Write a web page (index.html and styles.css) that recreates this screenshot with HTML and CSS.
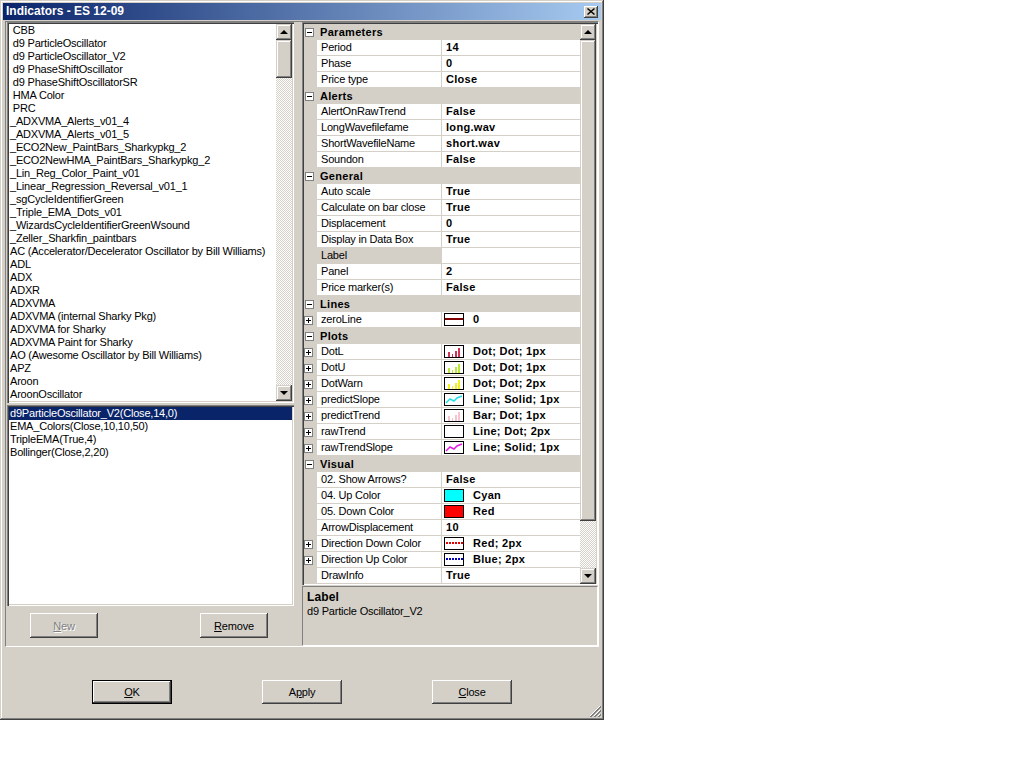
FILE: index.html
```html
<!DOCTYPE html>
<html>
<head>
<meta charset="utf-8">
<title>Indicators - ES 12-09</title>
<link rel="stylesheet" href="styles.css">
</head>
<body>
<div class="window">
  <div class="titlebar">
    <span class="title">Indicators - ES 12-09</span>
    <span class="close-btn"><svg width="8" height="7" viewBox="0 0 8 7"><path d="M0.5 0.5 L7.5 6.5 M7.5 0.5 L0.5 6.5" stroke="#000" stroke-width="1.4"/></svg></span>
  </div>
  <div class="panel">
    <div class="left">
      <div class="list list-top">
        <div class="items">
          <div class="item"> CBB</div>
          <div class="item"> d9 ParticleOscillator</div>
          <div class="item"> d9 ParticleOscillator_V2</div>
          <div class="item"> d9 PhaseShiftOscillator</div>
          <div class="item"> d9 PhaseShiftOscillatorSR</div>
          <div class="item"> HMA Color</div>
          <div class="item"> PRC</div>
          <div class="item">_ADXVMA_Alerts_v01_4</div>
          <div class="item">_ADXVMA_Alerts_v01_5</div>
          <div class="item">_ECO2New_PaintBars_Sharkypkg_2</div>
          <div class="item">_ECO2NewHMA_PaintBars_Sharkypkg_2</div>
          <div class="item">_Lin_Reg_Color_Paint_v01</div>
          <div class="item">_Linear_Regression_Reversal_v01_1</div>
          <div class="item">_sgCycleIdentifierGreen</div>
          <div class="item">_Triple_EMA_Dots_v01</div>
          <div class="item">_WizardsCycleIdentifierGreenWsound</div>
          <div class="item">_Zeller_Sharkfin_paintbars</div>
          <div class="item">AC (Accelerator/Decelerator Oscillator by Bill Williams)</div>
          <div class="item">ADL</div>
          <div class="item">ADX</div>
          <div class="item">ADXR</div>
          <div class="item">ADXVMA</div>
          <div class="item">ADXVMA (internal Sharky Pkg)</div>
          <div class="item">ADXVMA for Sharky</div>
          <div class="item">ADXVMA Paint for Sharky</div>
          <div class="item">AO (Awesome Oscillator by Bill Williams)</div>
          <div class="item">APZ</div>
          <div class="item">Aroon</div>
          <div class="item">AroonOscillator</div>
        </div>
        <div class="vscroll">
          <div class="sbtn"><span class="arrow-up"></span></div>
          <div class="thumb thumb-list"></div>
          <div class="track"></div>
          <div class="sbtn"><span class="arrow-down"></span></div>
        </div>
      </div>
      <div class="list list-bottom">
        <div class="items">
          <div class="item selected">d9ParticleOscillator_V2(Close,14,0)</div>
          <div class="item">EMA_Colors(Close,10,10,50)</div>
          <div class="item">TripleEMA(True,4)</div>
          <div class="item">Bollinger(Close,2,20)</div>
        </div>
      </div>
      <div class="btnrow">
        <div class="btn small disabled"><span><u>N</u>ew</span></div>
        <div class="btn small"><span><u>R</u>emove</span></div>
      </div>
    </div>
    <div class="right">
      <div class="grid">
        <div class="rows">
          <div class="cat"><span class="box"><svg width="9" height="9" viewBox="0 0 9 9"><rect x="0.5" y="0.5" width="8" height="8" fill="#fff" stroke="#808080"/><path d="M2 4.5 H7" stroke="#000"/></svg></span><span class="cat-name">Parameters</span></div>
          <div class="prop"><span class="gut"></span><span class="name">Period</span><span class="val"><b>14</b></span></div>
          <div class="prop"><span class="gut"></span><span class="name">Phase</span><span class="val"><b>0</b></span></div>
          <div class="prop"><span class="gut"></span><span class="name">Price type</span><span class="val"><b>Close</b></span></div>
          <div class="cat"><span class="box"><svg width="9" height="9" viewBox="0 0 9 9"><rect x="0.5" y="0.5" width="8" height="8" fill="#fff" stroke="#808080"/><path d="M2 4.5 H7" stroke="#000"/></svg></span><span class="cat-name">Alerts</span></div>
          <div class="prop"><span class="gut"></span><span class="name">AlertOnRawTrend</span><span class="val"><b>False</b></span></div>
          <div class="prop"><span class="gut"></span><span class="name">LongWavefilefame</span><span class="val"><b>long.wav</b></span></div>
          <div class="prop"><span class="gut"></span><span class="name">ShortWavefileName</span><span class="val"><b>short.wav</b></span></div>
          <div class="prop"><span class="gut"></span><span class="name">Soundon</span><span class="val"><b>False</b></span></div>
          <div class="cat"><span class="box"><svg width="9" height="9" viewBox="0 0 9 9"><rect x="0.5" y="0.5" width="8" height="8" fill="#fff" stroke="#808080"/><path d="M2 4.5 H7" stroke="#000"/></svg></span><span class="cat-name">General</span></div>
          <div class="prop"><span class="gut"></span><span class="name">Auto scale</span><span class="val"><b>True</b></span></div>
          <div class="prop"><span class="gut"></span><span class="name">Calculate on bar close</span><span class="val"><b>True</b></span></div>
          <div class="prop"><span class="gut"></span><span class="name">Displacement</span><span class="val"><b>0</b></span></div>
          <div class="prop"><span class="gut"></span><span class="name">Display in Data Box</span><span class="val"><b>True</b></span></div>
          <div class="prop"><span class="gut"></span><span class="name name-sel">Label</span><span class="val"></span></div>
          <div class="prop"><span class="gut"></span><span class="name">Panel</span><span class="val"><b>2</b></span></div>
          <div class="prop"><span class="gut"></span><span class="name">Price marker(s)</span><span class="val"><b>False</b></span></div>
          <div class="cat"><span class="box"><svg width="9" height="9" viewBox="0 0 9 9"><rect x="0.5" y="0.5" width="8" height="8" fill="#fff" stroke="#808080"/><path d="M2 4.5 H7" stroke="#000"/></svg></span><span class="cat-name">Lines</span></div>
          <div class="prop"><span class="gut"><svg width="9" height="9" viewBox="0 0 9 9"><rect x="0.5" y="0.5" width="8" height="8" fill="#fff" stroke="#808080"/><path d="M2 4.5 H7 M4.5 2 V7" stroke="#000"/></svg></span><span class="name">zeroLine</span><span class="val"><svg class="sw" width="20" height="13" viewBox="0 0 20 13"><rect x="0.5" y="0.5" width="19" height="12" fill="#fff" stroke="#000"/><rect x="1" y="5" width="18" height="2" fill="#800000"/></svg><b>0</b></span></div>
          <div class="cat"><span class="box"><svg width="9" height="9" viewBox="0 0 9 9"><rect x="0.5" y="0.5" width="8" height="8" fill="#fff" stroke="#808080"/><path d="M2 4.5 H7" stroke="#000"/></svg></span><span class="cat-name">Plots</span></div>
          <div class="prop"><span class="gut"><svg width="9" height="9" viewBox="0 0 9 9"><rect x="0.5" y="0.5" width="8" height="8" fill="#fff" stroke="#808080"/><path d="M2 4.5 H7 M4.5 2 V7" stroke="#000"/></svg></span><span class="name">DotL</span><span class="val"><svg class="sw" width="20" height="13" viewBox="0 0 20 13"><rect x="0.5" y="0.5" width="19" height="12" fill="#fff" stroke="#000"/><g fill="#cc3355"><rect x="4" y="7" width="2" height="5"/><rect x="8" y="9" width="1" height="3"/><rect x="11" y="6" width="2" height="6"/><rect x="14" y="3" width="2" height="9"/></g></svg><b>Dot; Dot; 1px</b></span></div>
          <div class="prop"><span class="gut"><svg width="9" height="9" viewBox="0 0 9 9"><rect x="0.5" y="0.5" width="8" height="8" fill="#fff" stroke="#808080"/><path d="M2 4.5 H7 M4.5 2 V7" stroke="#000"/></svg></span><span class="name">DotU</span><span class="val"><svg class="sw" width="20" height="13" viewBox="0 0 20 13"><rect x="0.5" y="0.5" width="19" height="12" fill="#fff" stroke="#000"/><g fill="#b8e838"><rect x="4" y="7" width="2" height="5"/><rect x="8" y="9" width="1" height="3"/><rect x="11" y="6" width="2" height="6"/><rect x="14" y="3" width="2" height="9"/></g></svg><b>Dot; Dot; 1px</b></span></div>
          <div class="prop"><span class="gut"><svg width="9" height="9" viewBox="0 0 9 9"><rect x="0.5" y="0.5" width="8" height="8" fill="#fff" stroke="#808080"/><path d="M2 4.5 H7 M4.5 2 V7" stroke="#000"/></svg></span><span class="name">DotWarn</span><span class="val"><svg class="sw" width="20" height="13" viewBox="0 0 20 13"><rect x="0.5" y="0.5" width="19" height="12" fill="#fff" stroke="#000"/><g fill="#f4f020"><rect x="4" y="7" width="2" height="5"/><rect x="8" y="9" width="1" height="3"/><rect x="11" y="6" width="2" height="6"/><rect x="14" y="3" width="2" height="9"/></g></svg><b>Dot; Dot; 2px</b></span></div>
          <div class="prop"><span class="gut"><svg width="9" height="9" viewBox="0 0 9 9"><rect x="0.5" y="0.5" width="8" height="8" fill="#fff" stroke="#808080"/><path d="M2 4.5 H7 M4.5 2 V7" stroke="#000"/></svg></span><span class="name">predictSlope</span><span class="val"><svg class="sw" width="20" height="13" viewBox="0 0 20 13"><rect x="0.5" y="0.5" width="19" height="12" fill="#fff" stroke="#000"/><polyline points="2,10 6,6 10,8 13,5 18,3" fill="none" stroke="#20e0e8" stroke-width="1.5"/></svg><b>Line; Solid; 1px</b></span></div>
          <div class="prop"><span class="gut"><svg width="9" height="9" viewBox="0 0 9 9"><rect x="0.5" y="0.5" width="8" height="8" fill="#fff" stroke="#808080"/><path d="M2 4.5 H7 M4.5 2 V7" stroke="#000"/></svg></span><span class="name">predictTrend</span><span class="val"><svg class="sw" width="20" height="13" viewBox="0 0 20 13"><rect x="0.5" y="0.5" width="19" height="12" fill="#fff" stroke="#000"/><g fill="#f6c4cc"><rect x="4" y="7" width="2" height="5"/><rect x="8" y="9" width="1" height="3"/><rect x="11" y="6" width="2" height="6"/><rect x="14" y="3" width="2" height="9"/></g></svg><b>Bar; Dot; 1px</b></span></div>
          <div class="prop"><span class="gut"><svg width="9" height="9" viewBox="0 0 9 9"><rect x="0.5" y="0.5" width="8" height="8" fill="#fff" stroke="#808080"/><path d="M2 4.5 H7 M4.5 2 V7" stroke="#000"/></svg></span><span class="name">rawTrend</span><span class="val"><svg class="sw" width="20" height="13" viewBox="0 0 20 13"><rect x="0.5" y="0.5" width="19" height="12" fill="#fff" stroke="#000"/></svg><b>Line; Dot; 2px</b></span></div>
          <div class="prop"><span class="gut"><svg width="9" height="9" viewBox="0 0 9 9"><rect x="0.5" y="0.5" width="8" height="8" fill="#fff" stroke="#808080"/><path d="M2 4.5 H7 M4.5 2 V7" stroke="#000"/></svg></span><span class="name">rawTrendSlope</span><span class="val"><svg class="sw" width="20" height="13" viewBox="0 0 20 13"><rect x="0.5" y="0.5" width="19" height="12" fill="#fff" stroke="#000"/><polyline points="2,10 6,6 10,8 13,5 18,3" fill="none" stroke="#e020e0" stroke-width="1.5"/></svg><b>Line; Solid; 1px</b></span></div>
          <div class="cat"><span class="box"><svg width="9" height="9" viewBox="0 0 9 9"><rect x="0.5" y="0.5" width="8" height="8" fill="#fff" stroke="#808080"/><path d="M2 4.5 H7" stroke="#000"/></svg></span><span class="cat-name">Visual</span></div>
          <div class="prop"><span class="gut"></span><span class="name">02. Show Arrows?</span><span class="val"><b>False</b></span></div>
          <div class="prop"><span class="gut"></span><span class="name">04. Up Color</span><span class="val"><svg class="sw" width="20" height="13" viewBox="0 0 20 13"><rect x="0.5" y="0.5" width="19" height="12" fill="#00ffff" stroke="#000"/></svg><b>Cyan</b></span></div>
          <div class="prop"><span class="gut"></span><span class="name">05. Down Color</span><span class="val"><svg class="sw" width="20" height="13" viewBox="0 0 20 13"><rect x="0.5" y="0.5" width="19" height="12" fill="#ff0000" stroke="#000"/></svg><b>Red</b></span></div>
          <div class="prop"><span class="gut"></span><span class="name">ArrowDisplacement</span><span class="val"><b>10</b></span></div>
          <div class="prop"><span class="gut"><svg width="9" height="9" viewBox="0 0 9 9"><rect x="0.5" y="0.5" width="8" height="8" fill="#fff" stroke="#808080"/><path d="M2 4.5 H7 M4.5 2 V7" stroke="#000"/></svg></span><span class="name">Direction Down Color</span><span class="val"><svg class="sw" width="20" height="13" viewBox="0 0 20 13"><rect x="0.5" y="0.5" width="19" height="12" fill="#fff" stroke="#000"/><line x1="2" y1="6" x2="19" y2="6" stroke="#e00000" stroke-width="2" stroke-dasharray="2 1"/></svg><b>Red; 2px</b></span></div>
          <div class="prop"><span class="gut"><svg width="9" height="9" viewBox="0 0 9 9"><rect x="0.5" y="0.5" width="8" height="8" fill="#fff" stroke="#808080"/><path d="M2 4.5 H7 M4.5 2 V7" stroke="#000"/></svg></span><span class="name">Direction Up Color</span><span class="val"><svg class="sw" width="20" height="13" viewBox="0 0 20 13"><rect x="0.5" y="0.5" width="19" height="12" fill="#fff" stroke="#000"/><line x1="2" y1="6" x2="19" y2="6" stroke="#0000c0" stroke-width="2" stroke-dasharray="2 1"/></svg><b>Blue; 2px</b></span></div>
          <div class="prop"><span class="gut"></span><span class="name">DrawInfo</span><span class="val"><b>True</b></span></div>
        </div>
        <div class="vscroll">
          <div class="sbtn"><span class="arrow-up"></span></div>
          <div class="thumb thumb-grid"></div>
          <div class="track"></div>
          <div class="sbtn"><span class="arrow-down"></span></div>
        </div>
      </div>
      <div class="desc">
        <div class="desc-title">Label</div>
        <div class="desc-text">d9 Particle Oscillator_V2</div>
      </div>
    </div>
  </div>
  <div class="footer">
    <div class="btn default"><span><u>O</u>K</span></div>
    <div class="btn"><span>A<u>p</u>ply</span></div>
    <div class="btn"><span><u>C</u>lose</span></div>
  </div>
  <div class="grip"><svg width="12" height="12" viewBox="0 0 12 12"><path d="M11 1 L1 11 M11 5 L5 11 M11 9 L9 11" stroke="#fff" stroke-width="1"/><path d="M12 1 L1 12 M12 2 L2 12 M12 5 L5 12 M12 6 L6 12 M12 9 L9 12 M12 10 L10 12" stroke="#808080" stroke-width="1"/></svg></div>
</div>
</body>
</html>
```

FILE: styles.css
```css
* { box-sizing: border-box; }
html, body { margin: 0; padding: 0; background: #fff; }
body {
  font-family: "Liberation Sans", Arial, sans-serif;
  font-size: 11px;
  color: #000;
}
u { text-decoration: underline; text-underline-offset: 1px; }

.window {
  position: relative;
  width: 604px;
  height: 720px;
  background: #d4d0c8;
  padding: 3px;
  display: flex;
  flex-direction: column;
  box-shadow: inset -1px -1px #404040, inset 1px 1px #d4d0c8, inset -2px -2px #808080, inset 2px 2px #fff;
}

.titlebar {
  height: 17px;
  flex: none;
  background: linear-gradient(to right, #0a246a, #a6caf0);
  display: flex;
  align-items: center;
  justify-content: space-between;
  padding: 0 3px 0 3px;
}
.title {
  color: #fff;
  font-weight: bold;
  font-size: 12px;
  line-height: 17px;
}
.close-btn {
  width: 14px;
  height: 12px;
  background: #d4d0c8;
  display: flex;
  align-items: center;
  justify-content: center;
  box-shadow: inset -1px -1px #404040, inset 1px 1px #fff, inset -2px -2px #808080;
}
.close-btn svg { display: block; }

.panel {
  margin: 1px 2px 0;
  height: 626px;
  flex: none;
  border: 1px solid;
  border-color: #808080 #fff #fff #808080;
  display: flex;
}
.left {
  margin-left: 1px;
  width: 287px;
  display: flex;
  flex-direction: column;
}
.right {
  margin-left: 8px;
  width: 296px;
  display: flex;
  flex-direction: column;
}

.list {
  background: #fff;
  padding: 2px;
  display: flex;
  flex: none;
  box-shadow: inset 1px 1px #808080, inset 2px 2px #404040, inset -1px -1px #fff, inset -2px -2px #d4d0c8;
}
.list-top { height: 381px; }
.list-bottom { height: 201px; margin-top: 2px; padding-top: 2px; }
.items { flex: 1; overflow: hidden; }
.item {
  height: 13px;
  line-height: 13px;
  padding-left: 1px;
  white-space: pre;
  letter-spacing: -0.2px;
}
.item.selected { background: #0a246a; color: #fff; }

.vscroll {
  width: 16px;
  flex: none;
  display: flex;
  flex-direction: column;
}
.sbtn, .thumb {
  background: #d4d0c8;
  box-shadow: inset -1px -1px #404040, inset 1px 1px #d4d0c8, inset -2px -2px #808080, inset 2px 2px #fff;
}
.sbtn {
  height: 16px;
  flex: none;
  display: flex;
  align-items: center;
  justify-content: center;
}
.arrow-up, .arrow-down {
  width: 0;
  height: 0;
  border-left: 4px solid transparent;
  border-right: 4px solid transparent;
}
.arrow-up { border-bottom: 4px solid #000; margin-top: -1px; }
.arrow-down { border-top: 4px solid #000; }
.thumb { flex: none; }
.thumb-list { height: 38px; }
.thumb-grid { height: 481px; }
.track {
  flex: 1;
  background: repeating-conic-gradient(#fff 0% 25%, #d4d0c8 0% 50%) 0 0 / 2px 2px;
}

.btnrow {
  margin-top: 7px;
  display: flex;
  justify-content: space-between;
  padding: 0 26px 0 23px;
}

.btn {
  width: 80px;
  height: 24px;
  flex: none;
  background: #d4d0c8;
  display: flex;
  align-items: center;
  justify-content: center;
  box-shadow: inset -1px -1px #404040, inset 1px 1px #fff, inset -2px -2px #808080, inset 2px 2px #d4d0c8;
  letter-spacing: -0.2px;
}
.btn.small { width: 68px; height: 25px; }
.btn.default {
  box-shadow: inset 0 0 0 1px #000, inset -2px -2px #404040, inset 2px 2px #fff, inset -3px -3px #808080;
}
.btn.disabled { color: #808080; text-shadow: 1px 1px #fff; }

.grid {
  height: 563px;
  flex: none;
  padding: 2px 2px 1px 2px;
  background: #d4d0c8;
  display: flex;
  box-shadow: inset 1px 1px #808080, inset 2px 2px #404040, inset -1px -1px #fff;
}
.rows { flex: 1; }
.cat {
  height: 16px;
  display: flex;
  align-items: center;
}
.cat .box { margin-left: 1px; width: 9px; height: 9px; display: flex; }
.cat-name {
  margin-left: 6px;
  font-weight: bold;
  letter-spacing: 0.3px;
}
.prop {
  height: 16px;
  display: grid;
  grid-template-columns: 13px 125px 1fr;
}
.gut { display: flex; align-items: center; }
.gut svg, .box svg { display: block; }
.name {
  background: #fff;
  border-right: 1px solid #d4d0c8;
  border-bottom: 1px solid #d4d0c8;
  padding-left: 4px;
  line-height: 15px;
  white-space: nowrap;
  overflow: hidden;
  letter-spacing: -0.2px;
}
.name.name-sel { background: #d4d0c8; }
.val {
  background: #fff;
  border-bottom: 1px solid #d4d0c8;
  padding-left: 2px;
  display: flex;
  align-items: center;
  white-space: nowrap;
  overflow: hidden;
}
.val b {
  margin-left: 2px;
  letter-spacing: 0.3px;
  line-height: 15px;
}
.val .sw { display: block; margin-right: 7px; flex: none; }

.desc {
  margin-top: 1px;
  height: 60px;
  border: 1px solid;
  border-color: #808080 #fff #fff #808080;
  padding: 3px 4px;
  line-height: 14px;
}
.desc-title { font-weight: bold; font-size: 12px; letter-spacing: 0.1px; }
.desc-text { letter-spacing: -0.2px; }

.footer {
  flex: 1;
  display: flex;
  align-items: flex-start;
  padding-top: 33px;
  padding-left: 89px;
  gap: 90px;
}

.grip {
  position: absolute;
  right: 3px;
  bottom: 3px;
  width: 12px;
  height: 12px;
}
.grip svg { display: block; }
```
